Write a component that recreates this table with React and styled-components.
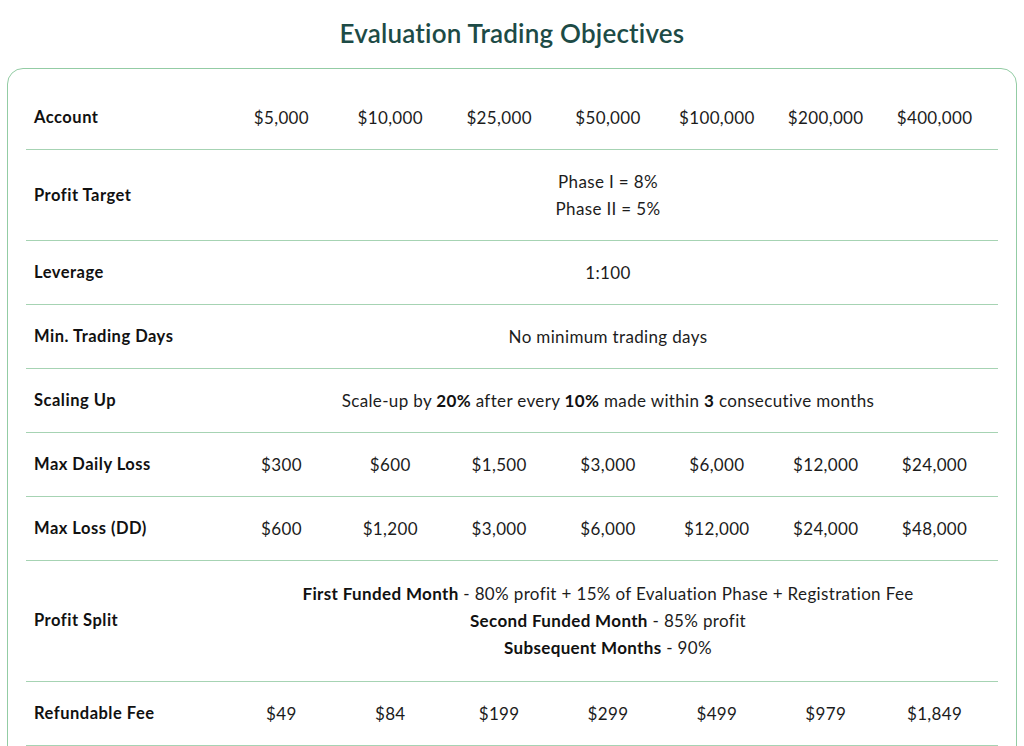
import React from "react";
import styled, { createGlobalStyle } from "styled-components";

const Global = createGlobalStyle`
  html, body { margin: 0; padding: 0; background: #ffffff; }
  body { font-family: "Lato", "Noto Sans", sans-serif; color: #1a1a1a; }
`;

const Page = styled.div`
  padding: 0 7px;
`;

const Title = styled.h2`
  margin: 0;
  height: 68px;
  display: flex;
  align-items: center;
  justify-content: center;
  padding-bottom: 3px;
  box-sizing: border-box;
  font-size: 26px;
  font-weight: 600;
  color: #1d4b46;
  letter-spacing: 0.2px;
`;

const Card = styled.div`
  border: 1px solid #93cca4;
  border-radius: 16px;
  padding: 17px 18px 17px;
`;

const Row = styled.div`
  display: grid;
  grid-template-columns: 193px repeat(7, 1fr);
  align-items: center;
  padding: ${(p) => (p.$tall ? "19px 9px 20px 8px" : "18px 9px 18px 8px")};
  border-bottom: 1px solid #a6d3b3;
  font-size: 17px;
  line-height: 27px;
  letter-spacing: 0.35px;
`;

const Label = styled.div`
  font-weight: 700;
  color: #111;
  font-size: 16.5px;
  letter-spacing: 0.5px;
`;

const Cell = styled.div`
  text-align: center;
  color: #1c1c1c;
`;

const Span = styled.div`
  grid-column: 2 / span 7;
  text-align: center;
  color: #1c1c1c;
`;

const Line = styled.div``;

const B = styled.b`
  font-weight: 700;
  color: #111;
`;

const accounts = ["$5,000", "$10,000", "$25,000", "$50,000", "$100,000", "$200,000", "$400,000"];
const daily = ["$300", "$600", "$1,500", "$3,000", "$6,000", "$12,000", "$24,000"];
const maxLoss = ["$600", "$1,200", "$3,000", "$6,000", "$12,000", "$24,000", "$48,000"];
const fees = ["$49", "$84", "$199", "$299", "$499", "$979", "$1,849"];

const ValueRow = ({ label, values }) => (
  <Row>
    <Label>{label}</Label>
    {values.map((v) => (
      <Cell key={v}>{v}</Cell>
    ))}
  </Row>
);

export default function App() {
  return (
    <Page>
      <Global />
      <Title>Evaluation Trading Objectives</Title>
      <Card>
        <ValueRow label="Account" values={accounts} />
        <Row>
          <Label>Profit Target</Label>
          <Span>
            <Line>Phase I = 8%</Line>
            <Line>Phase II = 5%</Line>
          </Span>
        </Row>
        <Row>
          <Label>Leverage</Label>
          <Span>1:100</Span>
        </Row>
        <Row>
          <Label>Min. Trading Days</Label>
          <Span>No minimum trading days</Span>
        </Row>
        <Row>
          <Label>Scaling Up</Label>
          <Span>
            Scale-up by <B>20%</B> after every <B>10%</B> made within <B>3</B> consecutive months
          </Span>
        </Row>
        <ValueRow label="Max Daily Loss" values={daily} />
        <ValueRow label="Max Loss (DD)" values={maxLoss} />
        <Row $tall>
          <Label>Profit Split</Label>
          <Span>
            <Line>
              <B>First Funded Month</B> - 80% profit + 15% of Evaluation Phase + Registration Fee
            </Line>
            <Line>
              <B>Second Funded Month</B> - 85% profit
            </Line>
            <Line>
              <B>Subsequent Months</B> - 90%
            </Line>
          </Span>
        </Row>
        <ValueRow label="Refundable Fee" values={fees} />
      </Card>
    </Page>
  );
}
